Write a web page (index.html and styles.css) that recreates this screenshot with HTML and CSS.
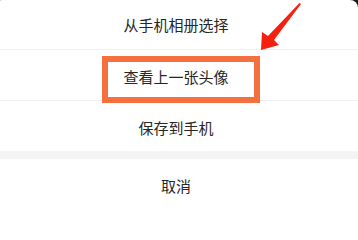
FILE: index.html
```html
<!DOCTYPE html>
<html lang="zh-CN">
<head>
<meta charset="utf-8">
<title>头像操作</title>
<link rel="stylesheet" href="styles.css">
</head>
<body>
<div class="sheet">
  <div class="item item-first">从手机相册选择</div>
  <div class="item item-mid">查看上一张头像</div>
  <div class="item item-last">保存到手机</div>
  <div class="gap"></div>
  <div class="item item-cancel">取消</div>
  <div class="filler"></div>
</div>
<div class="highlight"></div>
<svg class="arrow" width="60" height="60" viewBox="0 0 60 60">
  <polygon points="46,4 44.5,3 13,36 7,32 6,50 24,45 19,40" fill="#f5200e"/>
</svg>
</body>
</html>
```
FILE: styles.css
```css
html, body {
  margin: 0;
  padding: 0;
}
body {
  width: 358px;
  height: 100vh;
  min-height: 200px;
  overflow: hidden;
  background: #1b1b1b;
  position: relative;
  font-family: "Noto Sans CJK SC", "Noto Sans", sans-serif;
}
.sheet {
  margin-left: -6px;
  width: 364px;
  height: 100%;
  background: #ffffff;
  border-radius: 8px 8px 0 0;
  display: flex;
  flex-direction: column;
}
.item {
  display: flex;
  align-items: center;
  justify-content: center;
  font-size: 15px;
  color: #262626;
  line-height: 1;
  box-sizing: border-box;
}
.item-first {
  height: 50px;
  border-bottom: 1px solid #efefef;
}
.item-mid {
  height: 51px;
  padding-top: 3px;
  border-bottom: 1px solid #efefef;
}
.item-last {
  height: 50px;
  padding-top: 2px;
}
.gap {
  height: 8px;
  background: #f4f4f4;
}
.item-cancel {
  height: 52px;
  padding-top: 1px;
}
.filler {
  flex: 1;
}
.highlight {
  position: absolute;
  left: 102px;
  top: 56px;
  width: 158px;
  height: 47px;
  box-sizing: border-box;
  border: 6px solid #f4703e;
}
.arrow {
  position: absolute;
  left: 255px;
  top: 0;
}
```
